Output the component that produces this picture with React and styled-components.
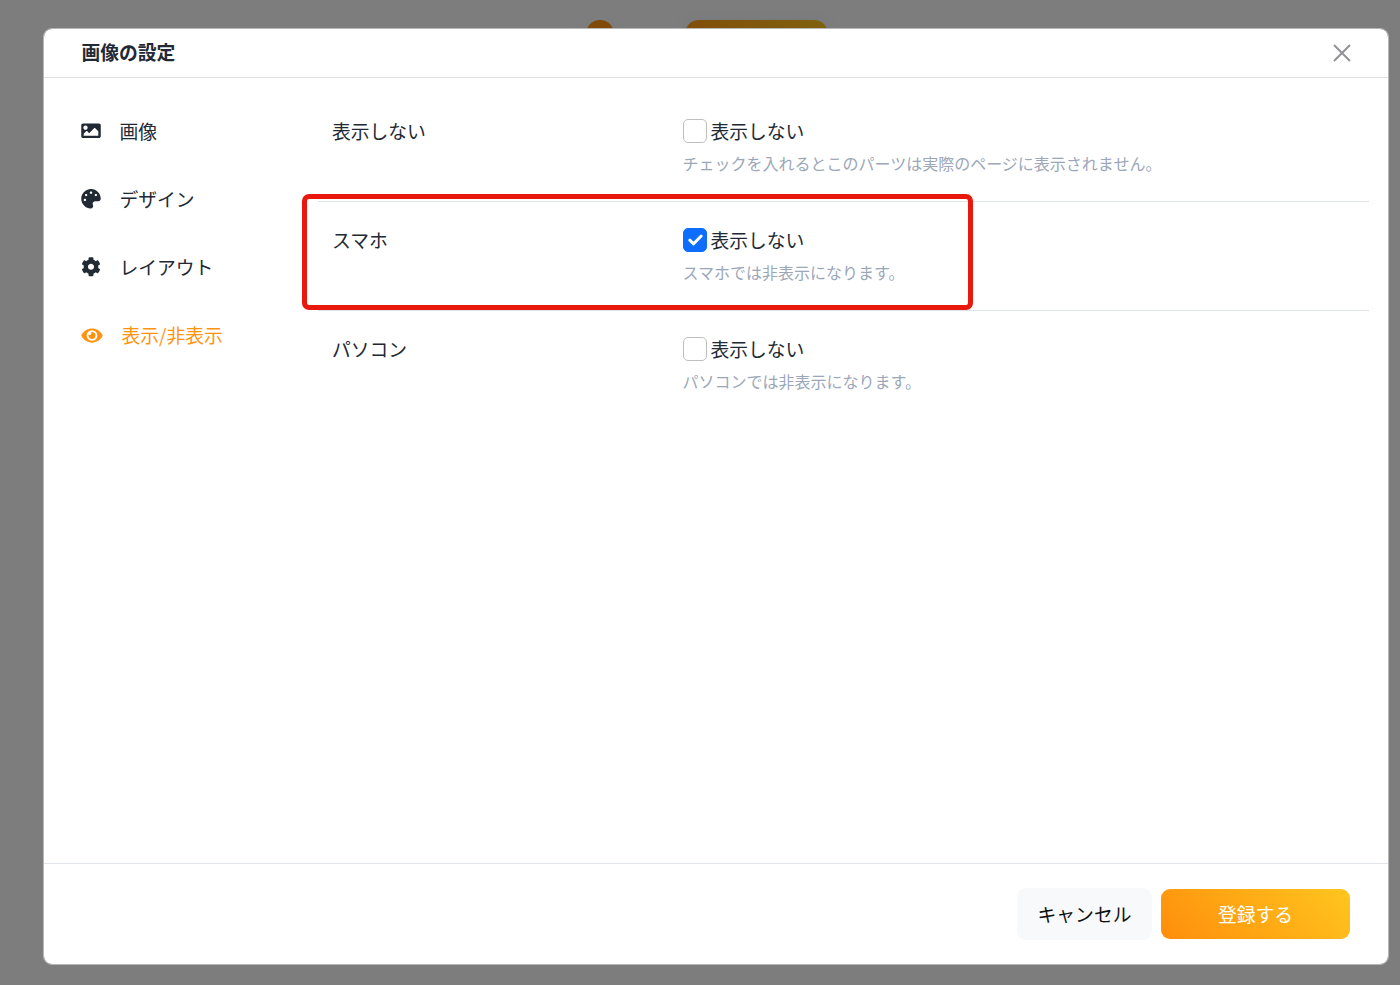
import React, { useState } from 'react';
import styled, { createGlobalStyle } from 'styled-components';
import { FaImage, FaPalette, FaCog, FaEye } from 'react-icons/fa';

const GlobalStyle = createGlobalStyle`
  * {
    box-sizing: border-box;
  }

  body {
    margin: 0;
    background: #7d7d7d;
    font-family: 'Noto Sans CJK JP', 'Noto Sans', sans-serif;
    font-size: 18.8px;
    color: #212934;
  }
`;

const Page = styled.div`
  position: relative;
  height: 985px;
  padding: 28px 11px 20px 42.5px;
  overflow: hidden;
`;

// parts of the dimmed page that peek out above the dialog
const BackDot = styled.div`
  position: absolute;
  top: 20px;
  left: 586px;
  width: 28px;
  height: 28px;
  border-radius: 50%;
  background: #814a08;
`;

const BackButton = styled.div`
  position: absolute;
  top: 20px;
  left: 685px;
  width: 143px;
  height: 40px;
  border-radius: 14px;
  background: linear-gradient(45deg, #814a08, #80620e);
  box-shadow: 0 0 10px rgba(110, 115, 130, 0.35);
`;

const Modal = styled.div`
  position: relative;
  display: flex;
  flex-direction: column;
  height: 937px;
  background: white;
  background-clip: padding-box;
  border: 1px solid #b8b8b8;
  border-radius: 9px;
`;

const Header = styled.div`
  display: flex;
  justify-content: space-between;
  align-items: center;
  height: 49px;
  padding: 0 37px 0 38px;
  border-bottom: 1px solid #dee2e6;
`;

const Title = styled.h2`
  margin: 0 0 2px;
  font-size: 18.8px;
  line-height: 28px;
  font-weight: bold;
`;

const CloseButton = styled.button`
  display: flex;
  padding: 0;
  border: none;
  background: none;
`;

const Body = styled.div`
  flex: 1;
  display: flex;
  padding: 0 19px 0 37.5px;
`;

const Menu = styled.ul`
  width: 237px;
  margin: 0;
  padding: 39px 0 0;
  list-style: none;
`;

const MenuItem = styled.li`
  display: flex;
  align-items: center;
  gap: 18.5px;
  height: 28px;
  margin-bottom: 40.1px;
  white-space: nowrap;
  color: ${(props) => (props.$active ? '#ff9310' : '#212934')};

  svg {
    flex: none;
    display: block;
    width: ${(props) => (props.$active ? '22px' : '20px')};
    height: ${(props) => (props.$active ? '19px' : '19.5px')};
  }
`;

const MenuText = styled.span`
  margin-bottom: 2px;
`;

const Settings = styled.div`
  flex: 1;
`;

const Row = styled.div`
  display: grid;
  grid-template-columns: 350.5px 1fr;
  height: ${(props) => props.$height};
  padding: ${(props) => props.$top} 0 0 14px;
  border-bottom: ${(props) => (props.$last ? 'none' : '1px solid #dee4ea')};
`;

const RowLabel = styled.div`
  margin-top: -0.5px;
  line-height: 27px;
`;

const CheckLabel = styled.label`
  display: flex;
  align-items: center;
  gap: 4px;
  height: 28px;
`;

const CheckText = styled.span`
  margin-bottom: 2px;
`;

const Checkbox = styled.input`
  appearance: none;
  width: 24px;
  height: 24px;
  margin: 0;
  border: 1px solid #bfbfbf;
  border-radius: 5px;
  background: white;

  &:checked {
    border-color: #0d6efd;
    background: #0d6efd;
  }
`;

const CheckWrap = styled.span`
  position: relative;
  display: flex;

  svg {
    position: absolute;
    top: 0;
    left: 0;
    pointer-events: none;
  }
`;

const Hint = styled.p`
  margin: 6px 0 0;
  font-size: 16px;
  line-height: 24px;
  color: #9ba7b8;
`;

const Highlight = styled.div`
  position: absolute;
  top: 165px;
  left: 258.5px;
  width: 671px;
  height: 116px;
  border: 5px solid #e8190c;
  border-radius: 7px;
  pointer-events: none;
`;

const Footer = styled.div`
  display: flex;
  justify-content: flex-end;
  align-items: center;
  gap: 9px;
  height: 101px;
  padding: 0 38px 0 0;
  border-top: 1px solid #e2e6eb;
`;

const Button = styled.button`
  width: 135px;
  height: 52px;
  padding: 0 0 1px;
  border: none;
  border-radius: 9px;
  background: #f8f9fb;
  color: #111;
  font-family: inherit;
  font-size: 18.8px;
  line-height: 28px;
`;

const PrimaryButton = styled(Button)`
  width: 189px;
  height: 50px;
  background: linear-gradient(45deg, #ff8d0c, #ffc61e);
  color: white;
`;

const menuItems = [
  { key: 'image', label: '画像', icon: FaImage },
  { key: 'design', label: 'デザイン', icon: FaPalette },
  { key: 'layout', label: 'レイアウト', icon: FaCog },
  { key: 'visibility', label: '表示/非表示', icon: FaEye },
];

const rows = [
  {
    key: 'all',
    label: '表示しない',
    hint: 'チェックを入れるとこのパーツは実際のページに表示されません。',
    height: '124px',
    top: '39px',
  },
  { key: 'sp', label: 'スマホ', hint: 'スマホでは非表示になります。', height: '109px', top: '24px' },
  { key: 'pc', label: 'パソコン', hint: 'パソコンでは非表示になります。', height: '110px', top: '24.4px' },
];

const App = () => {
  const [active, setActive] = useState('visibility');
  const [hidden, setHidden] = useState({ all: false, sp: true, pc: false });

  const toggle = (key) => {
    setHidden({ ...hidden, [key]: !hidden[key] });
  };

  return (
    <Page>
      <GlobalStyle />
      <BackDot />
      <BackButton />
      <Modal>
        <Header>
          <Title>画像の設定</Title>
          <CloseButton aria-label="閉じる">
            <svg width="18" height="18" viewBox="0 0 18 18" fill="none" stroke="#909295" strokeWidth="2">
              <path d="M1 1l16 16M17 1L1 17" />
            </svg>
          </CloseButton>
        </Header>

        <Body>
          <Menu>
            {menuItems.map(({ key, label, icon: Icon }) => (
              <MenuItem key={key} $active={key === active} onClick={() => setActive(key)}>
                <Icon />
                <MenuText>{label}</MenuText>
              </MenuItem>
            ))}
          </Menu>

          <Settings>
            {rows.map((row, index) => (
              <Row key={row.key} $height={row.height} $top={row.top} $last={index === rows.length - 1}>
                <RowLabel>{row.label}</RowLabel>
                <div>
                  <CheckLabel>
                    <CheckWrap>
                      <Checkbox type="checkbox" checked={hidden[row.key]} onChange={() => toggle(row.key)} />
                      {hidden[row.key] && (
                        <svg width="24" height="24" viewBox="0 0 24 24" fill="none" stroke="white">
                          <path d="M6.8 12.2l3.8 3.6 7.6-7.8" strokeWidth="3" strokeLinecap="round" strokeLinejoin="round" />
                        </svg>
                      )}
                    </CheckWrap>
                    <CheckText>表示しない</CheckText>
                  </CheckLabel>
                  <Hint>{row.hint}</Hint>
                </div>
              </Row>
            ))}
          </Settings>
        </Body>

        <Footer>
          <Button>キャンセル</Button>
          <PrimaryButton>登録する</PrimaryButton>
        </Footer>

        <Highlight />
      </Modal>
    </Page>
  );
};

export default App;
